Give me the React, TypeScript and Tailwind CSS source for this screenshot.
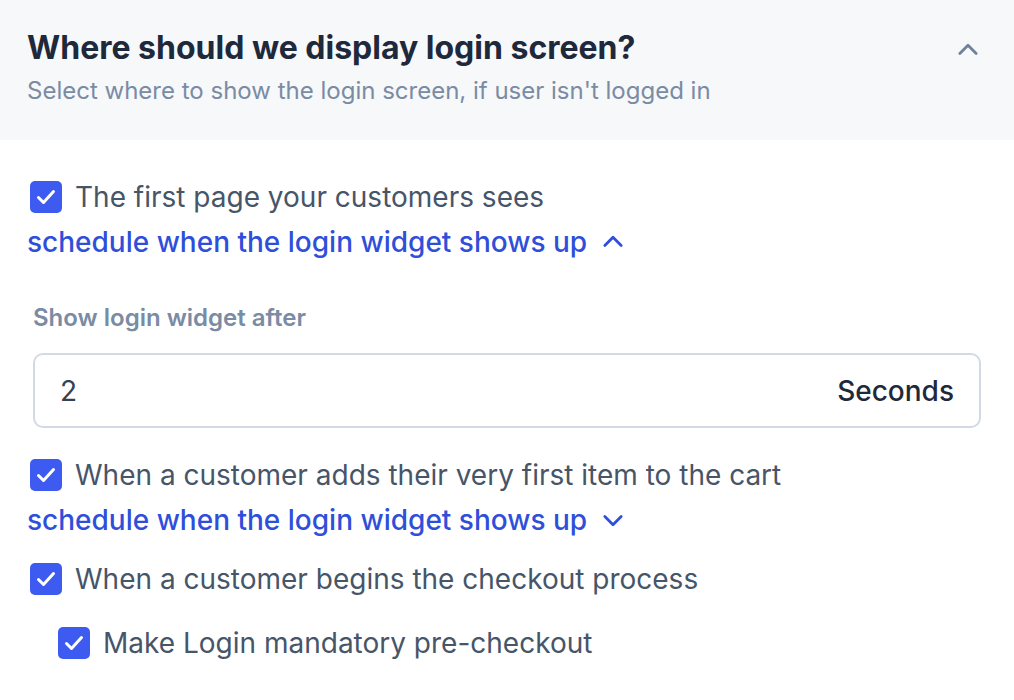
import React from "react";

const Check: React.FC = () => (
  <span className="flex h-8 w-8 shrink-0 items-center justify-center rounded-[5px] bg-[#3d5af1]">
    <svg className="h-8 w-8" fill="none" stroke="white" viewBox="0 0 32 32">
      <path
        strokeLinecap="round"
        strokeLinejoin="round"
        strokeWidth={3}
        d="M8.5 16.5l5 5 10-11"
      />
    </svg>
  </span>
);

const Chevron: React.FC<{ up?: boolean; className?: string }> = ({
  up,
  className,
}) => (
  <svg
    className={className}
    fill="none"
    stroke="currentColor"
    viewBox="0 0 24 24"
  >
    <path
      strokeLinecap="round"
      strokeLinejoin="round"
      strokeWidth={2.4}
      d={up ? "M5 15l7-7 7 7" : "M5 9l7 7 7-7"}
    />
  </svg>
);

const Option: React.FC<{ label: string; className?: string }> = ({
  label,
  className,
}) => (
  <label className={"flex items-center gap-[13px] " + (className ?? "")}>
    <Check />
    <span className="text-[28px] leading-8 text-[#475569]">{label}</span>
  </label>
);

const ScheduleLink: React.FC<{ open?: boolean }> = ({ open }) => (
  <button className="flex items-center gap-3 text-[28px] font-medium leading-8 text-[#2f4fdb]">
    schedule when the login widget shows up
    <Chevron up={open} className="h-7 w-7" />
  </button>
);

export default function App() {
  return (
    <div className="min-h-[700px] w-[1014px] bg-white font-['Inter',sans-serif]">
      <div className="flex h-[140px] items-start justify-between bg-[#f6f8fa] pl-[27px] pr-[32px] pt-[28px]">
        <div>
          <h2 className="text-[32px] font-bold leading-10 text-[#1e293b]">
            Where should we display login screen?
          </h2>
          <p className="mt-[7px] text-[24px] leading-8 text-[#7a8ba4]">
            Select where to show the login screen, if user isn't logged in
          </p>
        </div>
        <Chevron up className="mt-[8px] h-7 w-7 text-[#6e819b]" />
      </div>

      <div className="px-[27px] pt-[41px]">
        <Option label="The first page your customers sees" className="pl-[3px]" />
        <div className="mt-[13px]">
          <ScheduleLink open />
        </div>

        <div className="px-[6px] pt-[46px]">
          <div className="text-[24px] font-semibold leading-7 text-[#7a8ba4]">
            Show login widget after
          </div>
          <div className="mt-[21px] flex h-[75px] items-center justify-between rounded-[10px] border-2 border-[#d3dae4] px-[25px]">
            <span className="text-[28px] text-[#334155]">2</span>
            <span className="text-[28px] font-medium text-[#1e293b]">
              Seconds
            </span>
          </div>
        </div>

        <Option
          label="When a customer adds their very first item to the cart"
          className="mt-[31px] pl-[3px]"
        />
        <div className="mt-[13px]">
          <ScheduleLink />
        </div>
        <Option
          label="When a customer begins the checkout process"
          className="mt-[27px] pl-[3px]"
        />
        <Option
          label="Make Login mandatory pre-checkout"
          className="mt-[32px] pl-[31px]"
        />
      </div>
    </div>
  );
}
